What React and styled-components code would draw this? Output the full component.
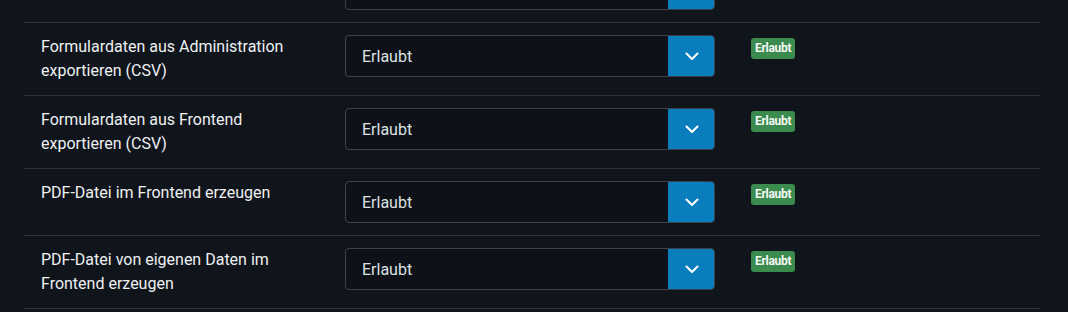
import React from 'react';
import styled, { createGlobalStyle } from 'styled-components';

const GlobalStyle = createGlobalStyle`
  html, body {
    margin: 0;
    padding: 0;
    background: #10151c;
  }
  body {
    font-family: Roboto, "Liberation Sans", sans-serif;
    color: #e6e9ec;
  }
`;

const Page = styled.div`
  width: 1068px;
  height: 312px;
  overflow: hidden;
  background: #10151c;
  padding: 0 28px 0 24px;
  box-sizing: border-box;
`;

const Table = styled.div`
  margin-top: -44px;
`;

const Row = styled.div`
  display: grid;
  grid-template-columns: 268px 370px auto;
  column-gap: 36px;
  align-items: start;
  padding: 12px 0 12px 17px;
  border-bottom: 1px solid #2c323a;
`;

const Label = styled.div`
  font-size: 16px;
  line-height: 24px;
  color: #eef0f2;
  min-height: 24px;
  white-space: nowrap;
`;

const Select = styled.div`
  display: flex;
  height: 42px;
  box-sizing: border-box;
  border: 1px solid #3b424b;
  border-radius: 4px;
  background: #0e1218;
  overflow: hidden;
`;

const SelectValue = styled.div`
  flex: 1;
  display: flex;
  align-items: center;
  padding-left: 16px;
  font-size: 16px;
  color: #dde1e5;
`;

const Toggle = styled.div`
  width: 47px;
  margin: -1px -1px -1px 0;
  background: #0a7dbd;
  display: flex;
  align-items: center;
  justify-content: center;
`;

const Badge = styled.span`
  display: inline-block;
  margin-top: 3px;
  padding: 0 4px;
  height: 21px;
  line-height: 21px;
  border-radius: 3px;
  background: #3b8a4e;
  color: #f4f8f4;
  font-size: 12px;
  font-weight: 700;
  letter-spacing: -0.3px;
`;

const Chevron = () => (
  <svg width="14" height="9" viewBox="0 0 14 9" fill="none">
    <path d="M1.5 1.5 L7 7 L12.5 1.5" stroke="#ffffff" strokeWidth="2" strokeLinecap="round" strokeLinejoin="round" />
  </svg>
);

const rows = [
  { label: 'Vorherige Einstellung', hidden: true },
  { label: <>Formulardaten aus Administration<br />exportieren (CSV)</> },
  { label: <>Formulardaten aus Frontend<br />exportieren (CSV)</> },
  { label: 'PDF-Datei im Frontend erzeugen' },
  { label: <>PDF-Datei von eigenen Daten im<br />Frontend erzeugen</> },
];

export default function App() {
  return (
    <Page>
      <GlobalStyle />
      <Table>
        {rows.map((r, i) => (
          <Row key={i}>
            <Label>{r.hidden ? null : r.label}</Label>
            <Select>
              <SelectValue>{r.hidden ? null : 'Erlaubt'}</SelectValue>
              <Toggle><Chevron /></Toggle>
            </Select>
            <div>{r.hidden ? null : <Badge>Erlaubt</Badge>}</div>
          </Row>
        ))}
      </Table>
    </Page>
  );
}
